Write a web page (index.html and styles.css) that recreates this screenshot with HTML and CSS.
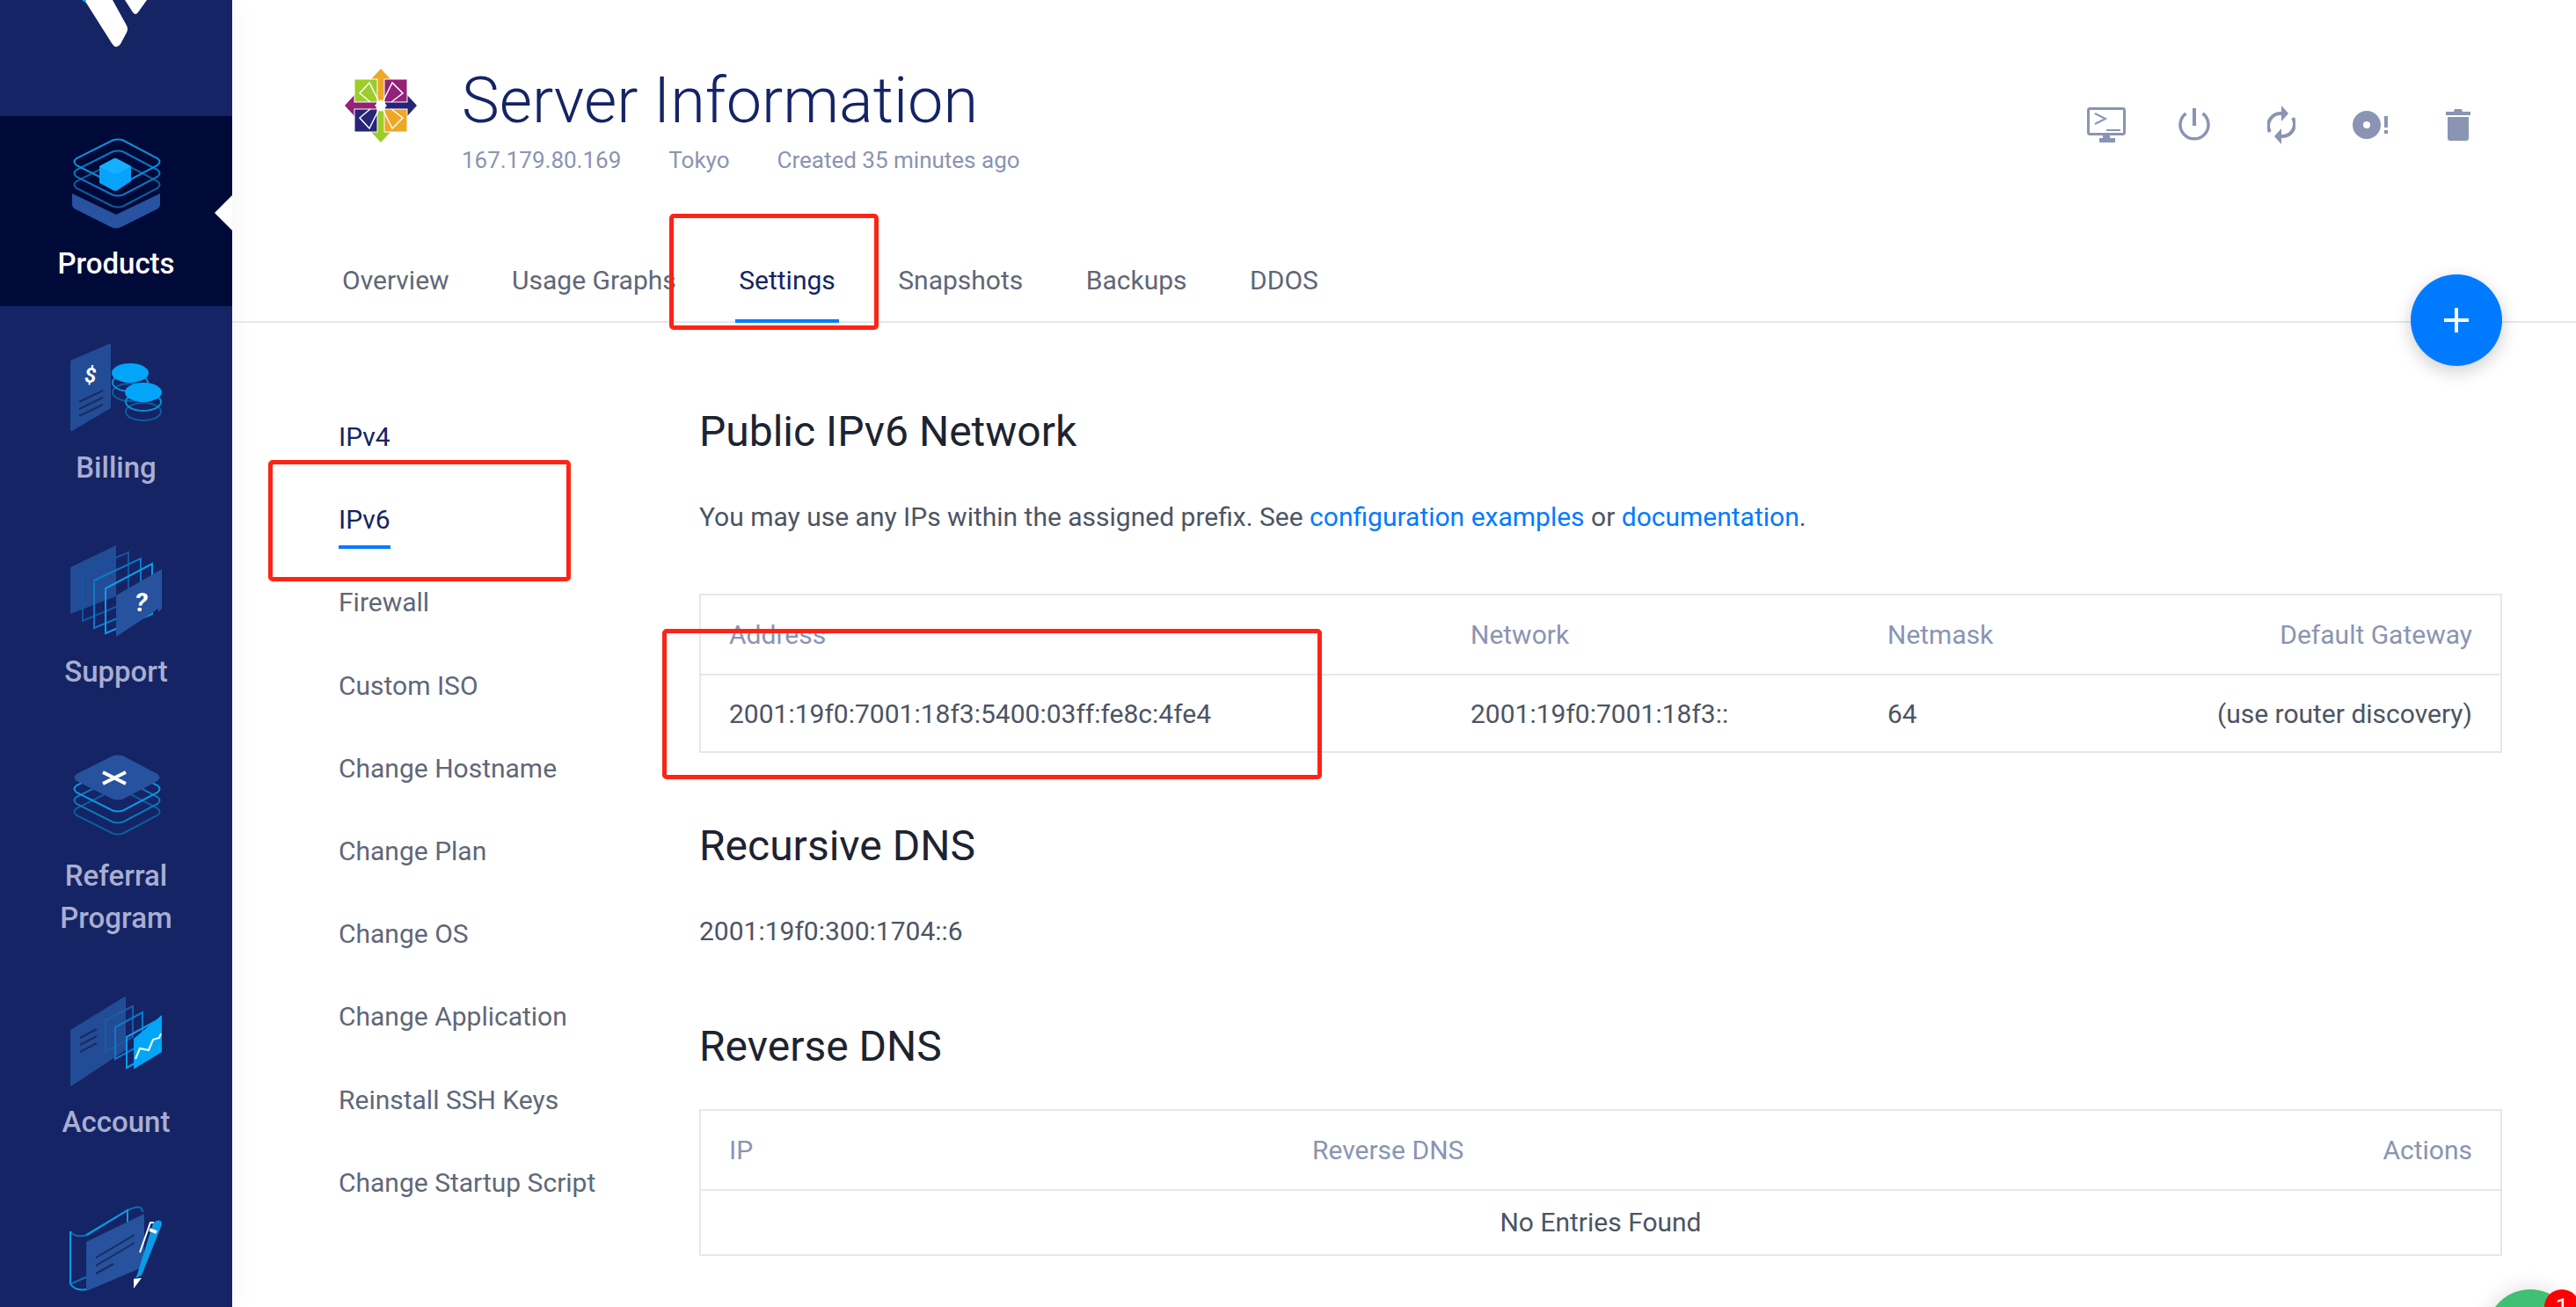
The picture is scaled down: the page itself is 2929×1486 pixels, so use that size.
FILE: index.html
```html
<!DOCTYPE html>
<html lang="en">
<head>
    <meta charset="UTF-8">
    <title>Server Information</title>
    <link rel="stylesheet" href="styles.css">
</head>
<body>
    <svg class="defs" width="0" height="0">
        <defs>
            <path id="diamond" d="M46 1.5 Q52 -0.5 58 1.5 L97 22 Q102 26 97 30 L58 50.5 Q52 52.5 46 50.5 L5 30 Q0 26 5 22 Z"/>
        </defs>
    </svg>
    <div class="app">
        <nav class="sidebar">
            <div class="logo">
                <svg width="264" height="132" viewBox="0 0 264 132">
                    <path d="M96 0 L127 49 Q132 57 137 50 L144 37 Q146 33 144 29 L128 0 Z" fill="#fff"/>
                    <path d="M142 0 L151 14 Q154 18 157 14 L167 0 Z" fill="#fff"/>
                    <path d="M93 0 L98 0 L97 3 Z" fill="#16a0f5"/>
                </svg>
            </div>
            <a class="nav-item active">
                <svg class="nav-icon" viewBox="0 0 104 104">
                    <path d="M2 64 L2 76 Q2 80 6 82 L46 102 Q52 105 58 102 L98 82 Q102 80 102 76 L102 64 L52 88 Z" fill="#2753a0"/>
                    <g fill="none" stroke-width="2">
                        <use href="#diamond" x="2" y="28" stroke="#0c5e9e"/>
                        <use href="#diamond" x="2" y="15" stroke="#0d78c0"/>
                        <use href="#diamond" x="2" y="2" stroke="#0e8fd8"/>
                    </g>
                    <path d="M33 33 L48 25 Q51 23 54 25 L69 33 L69 50 L54 60 Q51 62 48 60 L33 52 Z" fill="#08a2fb"/>
                    <path d="M33 33 L48 25 Q51 23 54 25 L69 33 L54 41 Q51 42 48 41 Z" fill="#14afff"/>
                </svg>
                <span>Products</span>
            </a>
            <a class="nav-item">
                <svg class="nav-icon" viewBox="0 0 104 104">
                    <path d="M2 21 L44 3 Q46 2 46 5 L46 76 L2 102 Q0 103 0 100 L0 23 Q0 22 2 21 Z" fill="#234c96"/>
                    <text class="icon-text" x="16" y="47" font-size="24">$</text>
                    <g stroke="#1b2b5c" stroke-width="2">
                        <path d="M10 69 L37 56"/>
                        <path d="M10 77 L37 64"/>
                        <path d="M10 85 L37 72"/>
                    </g>
                    <g fill="none" stroke-width="2">
                        <ellipse cx="68" cy="58" rx="20" ry="10" stroke="#0c5e9e"/>
                        <ellipse cx="68" cy="47" rx="20" ry="10" stroke="#0e8fd8"/>
                        <ellipse cx="83" cy="80" rx="20" ry="10" stroke="#0c5e9e"/>
                        <ellipse cx="83" cy="69" rx="20" ry="10" stroke="#0e8fd8"/>
                    </g>
                    <ellipse cx="68" cy="36" rx="21" ry="11" fill="#03a5f7"/>
                    <ellipse cx="83" cy="58" rx="21" ry="11" fill="#03a5f7"/>
                </svg>
                <span>Billing</span>
            </a>
            <a class="nav-item">
                <svg class="nav-icon" viewBox="0 0 104 104">
                    <path d="M0 25 L52 0 L52 58 L0 78 Z" fill="#234c96"/>
                    <g fill="none" stroke-width="2">
                        <path d="M14 30 L66 8 L66 64 L14 86 Z" stroke="#14569e"/>
                        <path d="M27 40 L80 15 L80 72 L27 94 Z" stroke="#0e78c6"/>
                        <path d="M40 49 L93 21 L93 78 L40 100 Z" stroke="#0d9be8"/>
                    </g>
                    <path d="M52 57 L104 27 L104 72 L100 76 L100 72 L52 104 Z" fill="#26529e"/>
                    <text class="icon-text" x="73" y="75" font-size="30">?</text>
                </svg>
                <span>Support</span>
            </a>
            <a class="nav-item">
                <svg class="nav-icon" viewBox="0 0 104 104">
                    <g fill="none" stroke-width="2">
                        <use href="#diamond" x="2" y="45" stroke="#0c5e9e"/>
                        <use href="#diamond" x="2" y="32" stroke="#0d78c0"/>
                        <use href="#diamond" x="2" y="19" stroke="#0e96e2"/>
                    </g>
                    <use href="#diamond" x="2" y="6" fill="#26529e"/>
                    <g stroke="#fff" stroke-width="4">
                        <path d="M37 26 L63 39"/>
                        <path d="M37 39 L63 26"/>
                    </g>
                </svg>
                <span>Referral<br>Program</span>
            </a>
            <a class="nav-item">
                <svg class="nav-icon" viewBox="0 0 104 104">
                    <path d="M0 39 L62 1 Q63 0 63 3 L63 62 L1 103 Q0 103 0 102 Z" fill="#234c96"/>
                    <g stroke="#1b2b5c" stroke-width="2">
                        <path d="M11 48 L30 38"/>
                        <path d="M11 56 L30 46"/>
                        <path d="M11 64 L30 54"/>
                    </g>
                    <g fill="none" stroke-width="2">
                        <path d="M40 28 L71 12 L71 47 L40 64 Z" stroke="#1a5ca6"/>
                        <path d="M51 36 L82 19 L82 55 L51 72 Z" stroke="#0e78c6"/>
                        <path d="M64 47 L95 30 L95 65 L64 82 Z" stroke="#0d9be8"/>
                    </g>
                    <path d="M72 49 L104 22 L104 64 L73 83 Q72 84 72 82 Z" fill="#03a5f7"/>
                    <path d="M74 72 L79 60 L89 62 L94 50 L101 48 L103 43" fill="none" stroke="#fff" stroke-width="2"/>
                </svg>
                <span>Account</span>
            </a>
            <a class="nav-item last">
                <svg class="nav-icon" viewBox="0 0 104 104">
                    <path d="M0 36 Q5 44 20 40 L65 12 Q82 4 82 14" fill="none" stroke="#0e6db5" stroke-width="2"/>
                    <path d="M0 36 L0 96 Q6 104 18 102" fill="none" stroke="#0d9be8" stroke-width="2"/>
                    <path d="M0 96 L18 88" fill="none" stroke="#0e6db5" stroke-width="2"/>
                    <path d="M18 40 L65 12 L65 28" fill="none" stroke="#0d9be8" stroke-width="2"/>
                    <path d="M18 48 L84 16 L84 76 L18 104 Z" fill="#26529e"/>
                    <g stroke="#1b2b5c" stroke-width="2">
                        <path d="M29 66 L73 40"/>
                        <path d="M29 75 L73 49"/>
                        <path d="M29 84 L49 73"/>
                    </g>
                    <path d="M79 60 L91 26 L95 26" fill="none" stroke="#fff" stroke-width="2"/>
                    <path d="M72 94 L76 85 L94 27 Q98 22 103 24 Q105 27 103 31 L81 86 L72 90 Z" fill="#0d9be8"/>
                    <path d="M72 90 L81 89 L72 101 Z" fill="#fff"/>
                    <path d="M90 34 L98 37" stroke="#fff" stroke-width="4"/>
                </svg>
            </a>
        </nav>

        <main class="main">
            <header class="server-head">
                <svg class="os-logo" viewBox="0 0 82 84">
                    <path d="M41 0 L52 12 L46 12 L46 37 L36 37 L36 12 L30 12 Z" fill="#efa724"/>
                    <path d="M82 42 L71 30 L71 37 L46 37 L46 47 L71 47 L71 54 Z" fill="#262577"/>
                    <path d="M41 84 L30 72 L36 72 L36 47 L46 47 L46 72 L52 72 Z" fill="#9ccd2a"/>
                    <path d="M0 42 L11 30 L11 37 L36 37 L36 47 L11 47 L11 54 Z" fill="#932279"/>
                    <rect x="11" y="12" width="26" height="26" fill="#9ccd2a" stroke="#fff"/>
                    <rect x="45" y="12" width="26" height="26" fill="#932279" stroke="#fff"/>
                    <rect x="11" y="46" width="26" height="26" fill="#262577" stroke="#fff"/>
                    <rect x="45" y="46" width="26" height="26" fill="#efa724" stroke="#fff"/>
                    <g fill="none" stroke="#fff" stroke-width="1.5">
                        <path d="M41 42 L28 16 L17 28 L29 38"/>
                        <path d="M41 42 L54 16 L66 28 L53 38"/>
                        <path d="M41 42 L28 68 L17 56 L29 46"/>
                        <path d="M41 42 L54 68 L66 56 L53 46"/>
                    </g>
                    <path d="M41 35 L48 42 L41 49 L34 42 Z" fill="#fff"/>
                </svg>
                <div class="server-title">
                    <h1>Server Information</h1>
                    <div class="server-meta">
                        <span>167.179.80.169</span>
                        <span>Tokyo</span>
                        <span>Created 35 minutes ago</span>
                    </div>
                </div>
                <div class="server-actions">
                    <svg class="console-icon" width="44" height="40" viewBox="0 0 44 40">
                        <rect x="1.5" y="1.5" width="41" height="29" rx="2" fill="none" stroke="#8a94b3" stroke-width="3"/>
                        <path d="M9 7 L21 13 L9 19" fill="none" stroke="#8a94b3" stroke-width="2"/>
                        <path d="M22 26 L38 26" stroke="#8a94b3" stroke-width="2"/>
                        <path d="M18 31 L26 31 L26 35 L32 35 L32 40 L14 40 L14 35 L18 35 Z" fill="#8a94b3"/>
                    </svg>
                    <svg width="36" height="38" viewBox="0 0 36 38">
                        <path d="M18 0 L18 20" stroke="#8a94b3" stroke-width="4"/>
                        <path d="M8.5 6 A16 16 0 1 0 27.5 6" fill="none" stroke="#8a94b3" stroke-width="3.5"/>
                    </svg>
                    <svg width="32" height="44" viewBox="0 0 32 44">
                        <path d="M3 30 A14 14 0 0 1 16 9" fill="none" stroke="#8a94b3" stroke-width="4"/>
                        <path d="M16 0 L24 9 L16 18 Z" fill="#8a94b3"/>
                        <path d="M29 14 A14 14 0 0 1 16 35" fill="none" stroke="#8a94b3" stroke-width="4"/>
                        <path d="M16 26 L8 35 L16 44 Z" fill="#8a94b3"/>
                    </svg>
                    <svg width="41" height="32" viewBox="0 0 41 32">
                        <path fill-rule="evenodd" d="M16 0 A16 16 0 1 1 16 32 A16 16 0 1 1 16 0 Z M16 12 A4 4 0 1 0 16 20 A4 4 0 1 0 16 12 Z" fill="#8a94b3"/>
                        <rect x="36" y="6" width="4" height="13" fill="#8a94b3"/>
                        <rect x="36" y="22" width="4" height="4" fill="#8a94b3"/>
                    </svg>
                    <svg width="28" height="36" viewBox="0 0 28 36">
                        <path d="M0 3 L9 3 L10 0 L18 0 L19 3 L28 3 L28 7 L0 7 Z" fill="#8a94b3"/>
                        <path d="M2 9 L26 9 L26 33 Q26 36 23 36 L5 36 Q2 36 2 33 Z" fill="#8a94b3"/>
                    </svg>
                </div>
            </header>

            <div class="tabs">
                <a class="tab">Overview</a>
                <a class="tab">Usage Graphs</a>
                <a class="tab active">Settings</a>
                <a class="tab">Snapshots</a>
                <a class="tab">Backups</a>
                <a class="tab">DDOS</a>
            </div>

            <div class="settings">
                <ul class="side-menu">
                    <li class="current">IPv4</li>
                    <li class="current selected">IPv6</li>
                    <li>Firewall</li>
                    <li>Custom ISO</li>
                    <li>Change Hostname</li>
                    <li>Change Plan</li>
                    <li>Change OS</li>
                    <li>Change Application</li>
                    <li>Reinstall SSH Keys</li>
                    <li>Change Startup Script</li>
                </ul>

                <section class="panel">
                    <h2>Public IPv6 Network</h2>
                    <p class="intro">You may use any IPs within the assigned prefix. See <a>configuration examples</a> or <a>documentation</a>.</p>
                    <div class="data-table">
                        <div class="row head ipv6-cols">
                            <div>Address</div>
                            <div>Network</div>
                            <div>Netmask</div>
                            <div class="end">Default Gateway</div>
                        </div>
                        <div class="row ipv6-cols">
                            <div>2001:19f0:7001:18f3:5400:03ff:fe8c:4fe4</div>
                            <div>2001:19f0:7001:18f3::</div>
                            <div>64</div>
                            <div class="end">(use router discovery)</div>
                        </div>
                    </div>

                    <h2 class="dns-title">Recursive DNS</h2>
                    <p class="dns-value">2001:19f0:300:1704::6</p>

                    <h2 class="reverse-title">Reverse DNS</h2>
                    <div class="data-table reverse">
                        <div class="row head reverse-cols">
                            <div>IP</div>
                            <div>Reverse DNS</div>
                            <div class="end">Actions</div>
                        </div>
                        <div class="row empty">No Entries Found</div>
                    </div>
                </section>
            </div>
        </main>
    </div>

    <button class="fab" type="button">
        <svg width="28" height="28" viewBox="0 0 28 28"><path d="M14 0 L14 28 M0 14 L28 14" stroke="#fff" stroke-width="4"/></svg>
    </button>
    <div class="chat-bubble"><span class="chat-badge">1</span></div>

    <!-- annotations drawn over the screenshot -->
    <div class="mark mark-tab"></div>
    <div class="mark mark-menu"></div>
    <div class="mark mark-address"></div>
</body>
</html>
```
FILE: styles.css
```css
html, body {
    margin: 0;
    padding: 0;
    height: 100%;
    overflow: hidden;
    background-color: #fff;
    font-family: Roboto, "Liberation Sans", sans-serif;
}
.defs {
    position: absolute;
}
.app {
    display: flex;
    height: 1486px;
    overflow: hidden;
}
a {
    text-decoration: none;
}

/* sidebar */
.sidebar {
    flex: 0 0 264px;
    width: 264px;
    background-color: #142465;
    color: #a9aed1;
    font-size: 33px;
    font-weight: 500;
    line-height: 48px;
    text-align: center;
    box-shadow: 0 0 30px rgba(0, 0, 0, 0.05);
    overflow: hidden;
}
.logo {
    height: 132px;
}
.logo svg {
    display: block;
}
.nav-item {
    display: block;
    position: relative;
    padding: 40px 0 22px;
}
.nav-item span {
    display: block;
    margin-top: -2px;
    margin-bottom: 2px;
}
.nav-icon {
    display: block;
    width: 104px;
    height: 104px;
    margin: 0 auto 18px;
    overflow: visible;
}
.nav-item.active {
    padding-top: 24px;
    background-color: #000a38;
    color: #fff;
}
.nav-item.active::after {
    content: "";
    position: absolute;
    right: 0;
    top: 90px;
    border-top: 20px solid transparent;
    border-bottom: 20px solid transparent;
    border-right: 20px solid #fff;
}
.icon-text {
    fill: #fff;
    font-weight: 700;
    font-style: italic;
}

/* page head */
.main {
    flex: 1;
    min-width: 0;
}
.server-head {
    display: flex;
    align-items: flex-start;
    height: 243px;
    padding: 78px 120px 0 128px;
    box-sizing: border-box;
}
.os-logo {
    width: 82px;
    height: 84px;
    margin-right: 51px;
    flex: none;
}
.server-title h1 {
    margin: 1px 0 0;
    font-size: 72px;
    font-weight: 300;
    line-height: 72px;
    color: #142465;
}
.server-meta {
    display: flex;
    gap: 54px;
    margin-top: 15px;
    font-size: 26px;
    line-height: 32px;
    color: #8a94b3;
}
.server-actions {
    display: flex;
    align-items: center;
    justify-content: flex-end;
    gap: 65px;
    height: 44px;
    margin: 42px 0 0 auto;
}
.console-icon {
    margin-right: -5px;
}

/* tabs */
.tabs {
    display: flex;
    gap: 63.5px;
    height: 124px;
    padding-left: 121px;
    border-bottom: 2px solid #e6e6ec;
    box-sizing: border-box;
}
.tab {
    padding: 54px 4px 0;
    height: 122px;
    box-sizing: border-box;
    font-size: 30px;
    line-height: 44px;
    color: #5f6779;
}
.tab.active {
    color: #142465;
    border-bottom: 4px solid #007bff;
    height: 124px;
}

/* settings */
.settings {
    display: flex;
    padding-right: 84px;
}
.side-menu {
    list-style: none;
    flex: 0 0 531px;
    box-sizing: border-box;
    margin: 0;
    padding: 108px 0 0 121px;
    font-size: 30px;
    color: #5f6779;
}
.side-menu li {
    height: 94.2px;
    line-height: 44px;
    white-space: nowrap;
}
.side-menu .current {
    color: #142465;
}
.side-menu .selected {
    position: relative;
}
.side-menu .selected::after {
    content: "";
    position: absolute;
    left: 0;
    top: 51px;
    width: 59px;
    height: 4px;
    background-color: #007bff;
}
.panel {
    flex: 1;
    min-width: 0;
    padding-top: 96px;
    color: #4d5464;
    font-size: 30px;
}
.panel h2 {
    margin: 0;
    font-size: 48px;
    font-weight: 400;
    line-height: 56px;
    color: #1d2330;
}
.intro {
    margin: 47px 0 0;
    line-height: 44px;
}
.intro a {
    color: #007bff;
}
.data-table {
    margin-top: 65px;
    border: 2px solid #e6e6ec;
}
.row {
    display: grid;
    align-items: center;
    height: 89px;
    padding: 0 32px;
}
.row + .row {
    height: 86px;
    border-top: 2px solid #e6e6ec;
}
.head {
    color: #8a94b3;
}
.ipv6-cols {
    grid-template-columns: 843px 474px 1fr auto;
}
.reverse-cols {
    grid-template-columns: 663px 1fr auto;
}
.end {
    text-align: right;
}
.panel .dns-title {
    margin-top: 78px;
}
.dns-value {
    margin: 47px 0 0;
    line-height: 44px;
}
.panel .reverse-title {
    margin-top: 81px;
}
.data-table.reverse {
    margin-top: 43px;
}
.reverse .row + .row {
    display: block;
    height: 72px;
    line-height: 72px;
    text-align: center;
}

/* floating things */
.fab {
    position: absolute;
    left: 2741px;
    top: 312px;
    display: flex;
    align-items: center;
    justify-content: center;
    width: 104px;
    height: 104px;
    padding: 0;
    border: none;
    border-radius: 50%;
    background-color: #007bff;
    box-shadow: 0 6px 20px rgba(0, 0, 0, 0.2);
}
.chat-bubble {
    position: absolute;
    left: 2827px;
    top: 1466px;
    width: 100px;
    height: 100px;
    border-radius: 50%;
    background-color: #3fc073;
    box-shadow: 0 0 24px rgba(0, 0, 0, 0.15);
}
.chat-badge {
    position: absolute;
    left: 66px;
    top: 0;
    width: 40px;
    height: 40px;
    border-radius: 50%;
    background-color: #f00;
    color: #fff;
    font-size: 26px;
    line-height: 40px;
    text-align: center;
}
.mark {
    position: absolute;
    box-sizing: border-box;
    border: 5px solid #fe2415;
    border-radius: 5px;
}
.mark-tab {
    left: 761px;
    top: 243px;
    width: 238px;
    height: 132px;
}
.mark-menu {
    left: 305px;
    top: 523px;
    width: 344px;
    height: 138px;
}
.mark-address {
    left: 753px;
    top: 715px;
    width: 750px;
    height: 171px;
}
```
